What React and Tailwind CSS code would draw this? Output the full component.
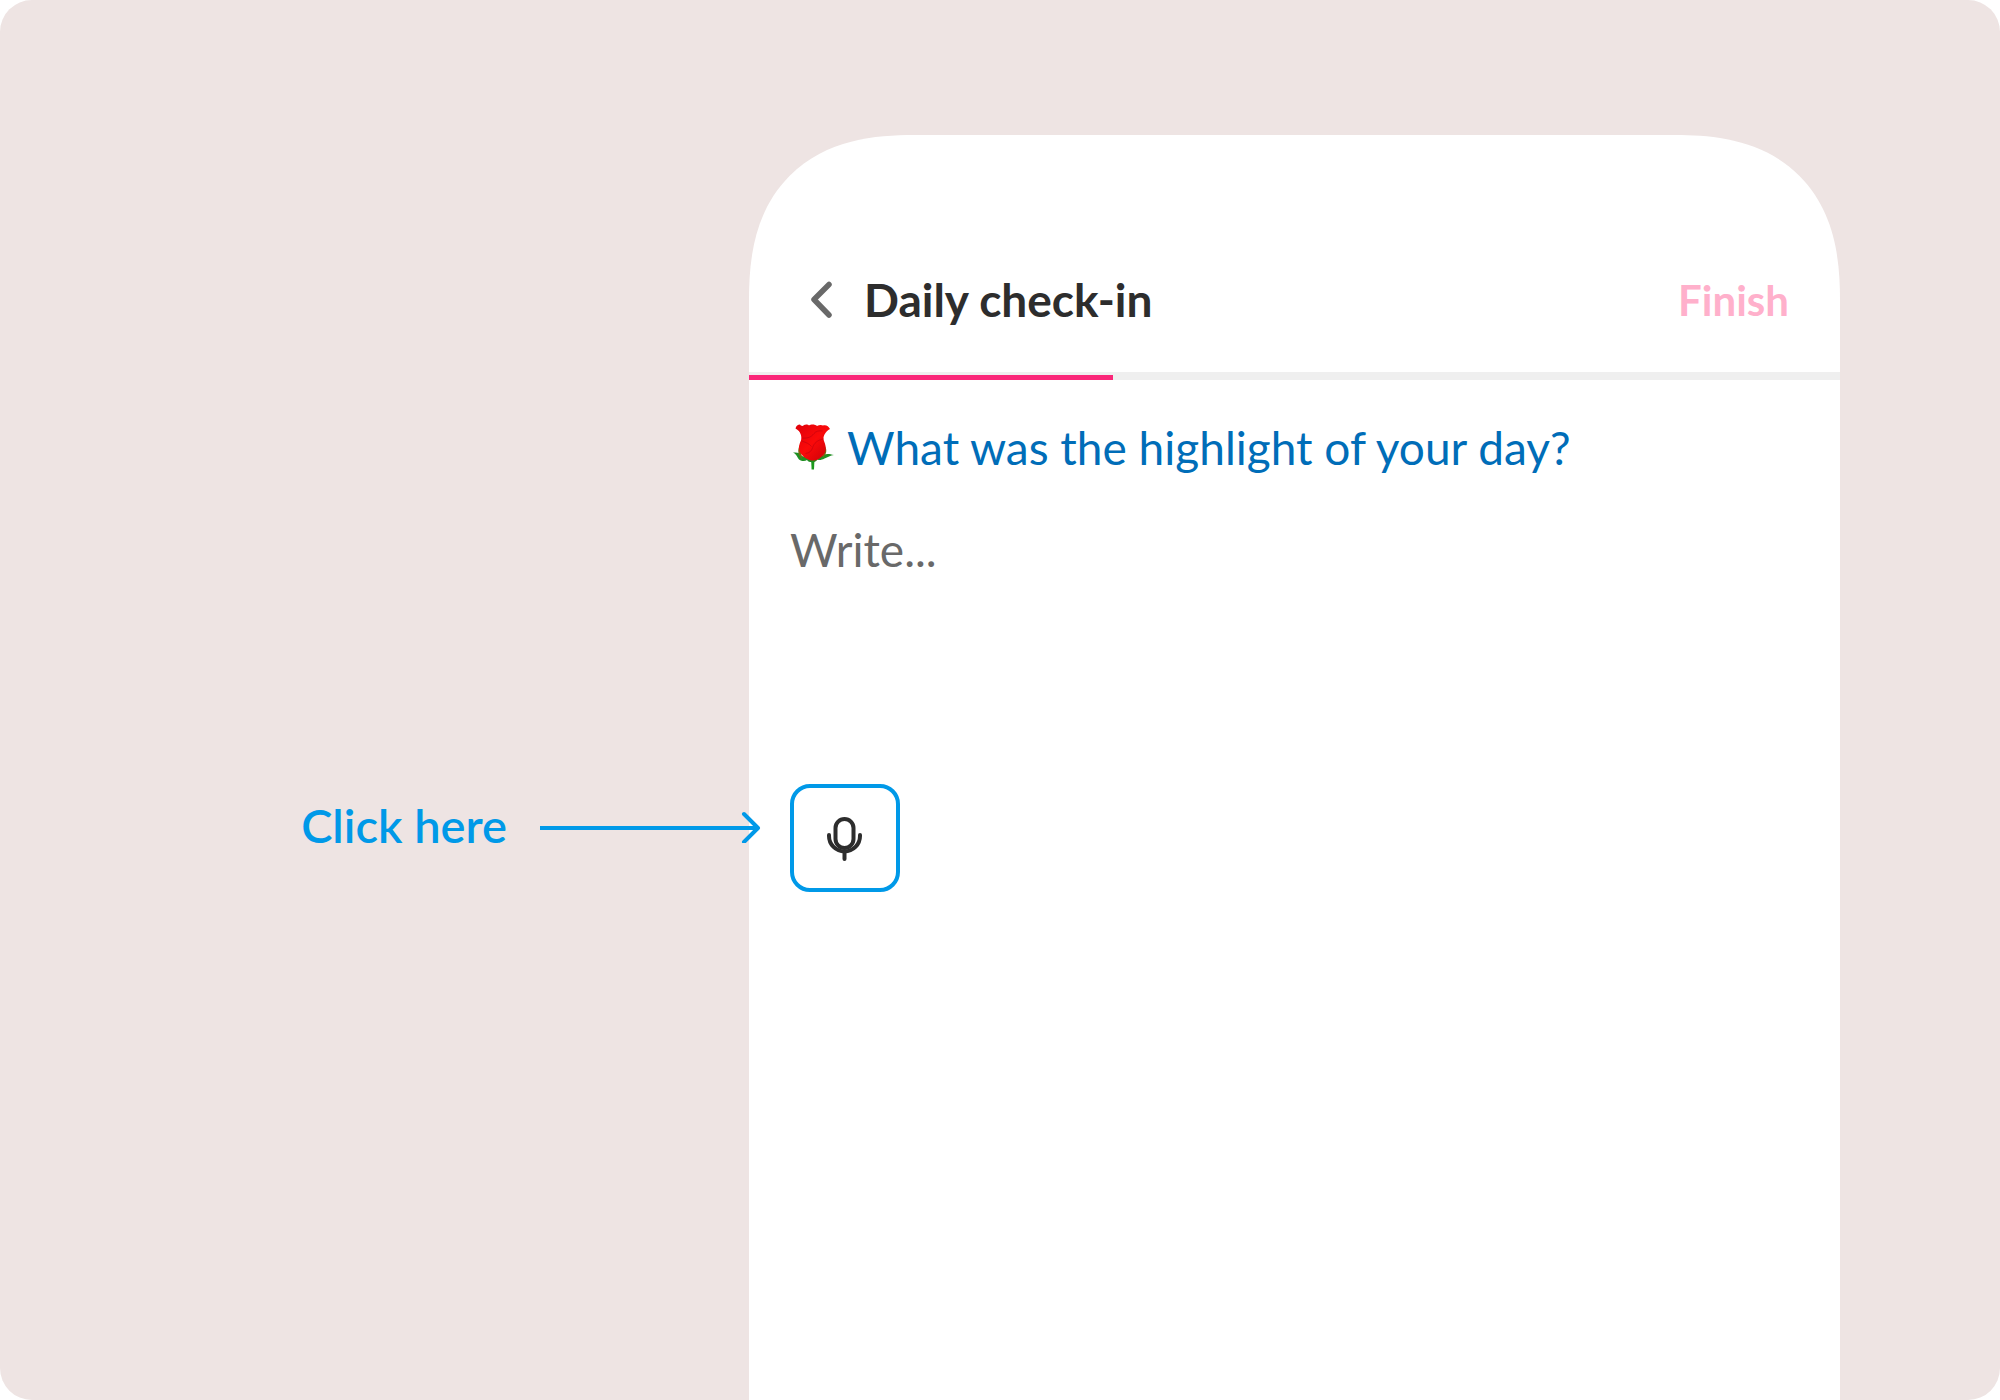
// src/App.jsx
function BackIcon() {
    return (
        <svg viewBox="0 0 22 38" className="h-[38px] w-[22px]" fill="none" aria-hidden="true">
            <path d="M19 3.500 4 18.500l15 15.500" stroke="#696969" strokeWidth="5.500" strokeLinecap="round" strokeLinejoin="round" />
        </svg>
    );
}

function MicIcon() {
    return (
        <svg viewBox="0 0 36 46" className="h-[46px] w-9" fill="none" stroke="#2d2d2d" strokeWidth="4" strokeLinecap="round" aria-hidden="true">
            <rect x="8.500" y="4" width="18" height="29" rx="9" />
            <path d="M2 20v1a15.500 15.500 0 0 0 31 0v-1M17.500 38v6" />
        </svg>
    );
}

function Rose() {
    return (
        <svg viewBox="0 0 42 48" className="h-12 w-[42px] shrink-0" role="img" aria-label="Rose">
            <defs>
                <linearGradient id="petal" x1="0" y1="0" x2="1" y2="1">
                    <stop offset="0" stopColor="#e0000a" />
                    <stop offset=".5" stopColor="#fa0a0a" />
                    <stop offset="1" stopColor="#c80008" />
                </linearGradient>
            </defs>
            <path d="M18 33h3.600l-.6 12.500h-2.400z" fill="#1c9a1c" />
            <path d="M0 28.500c5-.5 7 .5 9 3.500 3 1 6 2 10.500 3 4-1 8-2 10.500-4 3-1.500 6-1.500 11 0-4 .5-6 2-9.500 3.500-3 1.500-5 2-7 1-1.500 2-2.500 2.500-5 3-3-.5-4.500-1-5.500-2.500-2 1.500-5 1.500-8-.500C4.500 34 4 30.500 0 28.500z" fill="#1f8f22" />
            <path d="M7 21c-3 5-2 10 2 14C8 29 8 26 9.500 22zM31 21c3.500 4 3 9-1.500 13 1-4 1.500-8 0-12z" fill="#7a6a14" />
            <path d="M2.500 4.500C3 2 5 .5 7 .5c1.500 2 3 1.500 4 .500 2-1 4-.5 5 .5 2-1.500 6-1.500 8 .500 2-1 4-1.500 6-.500 3-1 5.500.5 7 3.500-2.500 1-4 3-5.500 5.500-1 2-1.500 4-.5 6.500 2.500 6 2.500 11-1 14.500-3 3-6 5-10 5s-8-2-11.500-6c-3.500-4.500-3-9-.5-14C9 12.500 8 7.500 2.500 4.500z" fill="url(#petal)" />
            <path d="M9 14c5 .5 9-.5 12-4.500 2-2.500 5-3 8.500-2.500M8.500 17c5 1.500 8 3 10 5.500M30.500 15c-6 1-9.500 4-11 9-1 3-3 5-7 5.500" fill="none" stroke="#b30010" strokeWidth="1" opacity=".5" />
        </svg>
    );
}

function Callout() {
    return (
        <div className="relative z-10 -mr-3 flex items-center justify-end gap-8 self-start pt-[797px]">
            <span className="text-[47px] leading-14 font-semibold whitespace-nowrap text-[#0099e8]">Click here</span>
            <svg viewBox="0 0 222 36" className="h-9 w-[222px] shrink-0" fill="none" stroke="#0099e8" strokeWidth="4" aria-hidden="true">
                <path d="M1 21h217" />
                <path d="m205 7 14 14-14 14" strokeLinecap="round" strokeLinejoin="round" />
            </svg>
        </div>
    );
}

function CheckIn() {
    return (
        <main className="mt-[135px] flex flex-col overflow-hidden rounded-t-[165px] bg-white [corner-shape:superellipse(1.29)]">
            <header className="flex items-center justify-between pt-[146px] pr-[51px] pb-[53px] pl-[61px]">
                <div className="flex items-center gap-8">
                    <button type="button" aria-label="Back">
                        <BackIcon />
                    </button>
                    <h1 className="text-[46px] leading-9 font-bold text-[#2d2d2d]">Daily check-in</h1>
                </div>
                <button type="button" className="text-[42px] leading-9 font-bold text-[#ffb0cb]">
                    Finish
                </button>
            </header>

            {/* Step 1 of 3 */}
            <div className="h-2 bg-[#efefef] pt-[3px]">
                <div className="h-[5px] w-1/3 bg-[#fa2779]" />
            </div>

            <section className="flex flex-col items-start pt-10 pr-10 pl-[41px]">
                <label htmlFor="highlight" className="flex items-center gap-3 pl-[3px] text-[46px] leading-14 text-[#006db8]">
                    <Rose />
                    What was the highlight of your day?
                </label>
                <textarea
                    id="highlight"
                    placeholder="Write..."
                    className="mt-[46px] h-[220px] w-full resize-none text-[46px] leading-14 text-[#2d2d2d] outline-none placeholder:text-[#696969]"
                />
                <button
                    type="button"
                    aria-label="Record your answer"
                    className="mt-[42px] grid h-[108px] w-[110px] place-items-center rounded-[20px] border-4 border-[#0099e8]"
                >
                    <MicIcon />
                </button>
            </section>
        </main>
    );
}

export default function App() {
    return (
        <div className="bg-white font-['Lato',sans-serif]">
            <div className="grid min-h-screen grid-cols-[749fr_1091fr_160fr] rounded-[32px] bg-[#eee4e3]">
                <Callout />
                <CheckIn />
            </div>
        </div>
    );
}
